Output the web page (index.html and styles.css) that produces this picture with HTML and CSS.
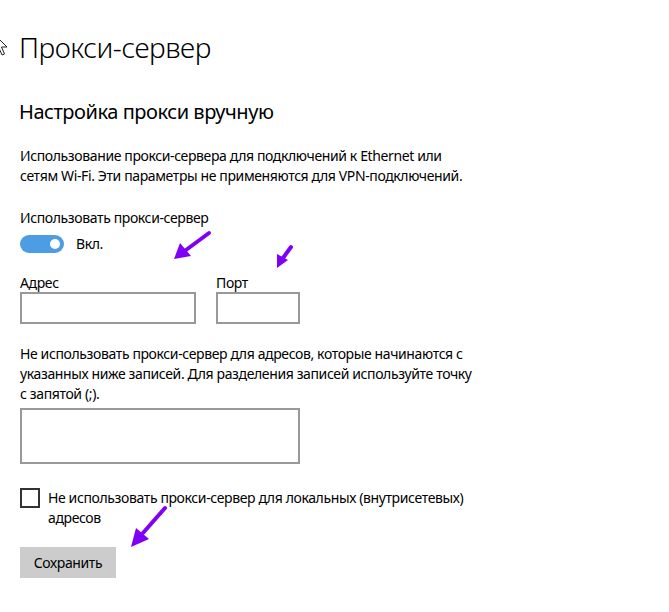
FILE: index.html
```html
<!DOCTYPE html>
<html lang="ru">
<head>
<meta charset="utf-8">
<title>Прокси-сервер</title>
<link rel="stylesheet" href="styles.css">
</head>
<body>
<main class="page">
  <h1 class="title">Прокси-сервер</h1>
  <h2 class="subtitle">Настройка прокси вручную</h2>

  <p class="text intro">Использование прокси-сервера для подключений к Ethernet или<br>сетям Wi-Fi. Эти параметры не применяются для VPN-подключений.</p>

  <div class="field-label">Использовать прокси-сервер</div>
  <div class="toggle-row">
    <span class="toggle"><span class="knob"></span></span>
    <span class="toggle-text">Вкл.</span>
  </div>

  <div class="inputs">
    <label class="field">
      <span class="field-caption">Адрес</span>
      <span class="box box-address"></span>
    </label>
    <label class="field">
      <span class="field-caption">Порт</span>
      <span class="box box-port"></span>
    </label>
  </div>

  <p class="text exceptions">Не использовать прокси-сервер для адресов, которые начинаются с<br>указанных ниже записей. Для разделения записей используйте точку<br>с запятой (;).</p>
  <div class="box box-area"></div>

  <div class="check-row">
    <span class="checkbox"></span>
    <span class="check-text">Не использовать прокси-сервер для локальных (внутрисетевых)<br>адресов</span>
  </div>

  <button class="save" type="button">Сохранить</button>
</main>

<!-- mouse pointer peeking in at the left edge -->
<svg class="pointer" width="20" height="28" viewBox="0 0 20 28">
  <path d="M1 1 L1 18 L5 14 L8 21 L10.5 20 L7.5 13 L13 13 Z" fill="#fff" stroke="#222" stroke-width="1"/>
</svg>

<!-- hand-drawn annotation arrows -->
<svg class="marks" width="669" height="612" viewBox="0 0 669 612">
  <g stroke="#7f00f5" stroke-width="4" stroke-linecap="round" fill="#7f00f5">
    <line x1="209" y1="233" x2="186" y2="250"/>
    <line x1="291" y1="247" x2="283" y2="258"/>
    <line x1="165" y1="508" x2="143" y2="533"/>
  </g>
  <g fill="#7f00f5">
    <polygon points="174,259 180,243 191,256"/>
    <polygon points="277,268 277,254 288,260"/>
    <polygon points="131,547 136,528 149,539"/>
  </g>
</svg>
</body>
</html>
```

FILE: styles.css
```css
html, body {
  margin: 0;
  padding: 0;
  background: #fff;
}

body {
  font-family: "Noto Sans", "Open Sans", "DejaVu Sans", sans-serif;
  color: #000;
  position: relative;
  width: 669px;
  height: 612px;
  overflow: hidden;
}

.page {
  padding: 29px 0 0 20px;
  display: flex;
  flex-direction: column;
  align-items: flex-start;
}

.title {
  margin: 0 0 0 -1px;
  font-size: 28px;
  line-height: 36px;
  font-weight: 300;
  letter-spacing: -0.45px;
}

.subtitle {
  margin: 33px 0 0 -1px;
  font-size: 20px;
  line-height: 28px;
  font-weight: 400;
  letter-spacing: -0.45px;
}

.text,
.field-label,
.toggle-text,
.field-caption,
.check-text,
.save {
  font-size: 14px;
  letter-spacing: -0.38px;
}

.text {
  margin: 0;
  line-height: 20px;
}

.intro {
  margin-top: 20px;
}

.field-label {
  margin-top: 22px;
  line-height: 20px;
}

.toggle-row {
  margin-top: 6px;
  display: flex;
  align-items: center;
  gap: 12px;
}

.toggle {
  width: 44px;
  height: 18px;
  border-radius: 9px;
  background: #4c9de3;
  display: flex;
  align-items: center;
  justify-content: flex-end;
  padding-right: 4px;
  box-sizing: border-box;
}

.knob {
  width: 10px;
  height: 10px;
  border-radius: 50%;
  background: #fff;
}

.toggle-text {
  line-height: 20px;
}

.inputs {
  margin-top: 20px;
  display: flex;
  gap: 20px;
}

.field {
  display: flex;
  flex-direction: column;
}

.field-caption {
  line-height: 18px;
}

.box {
  display: block;
  border: 2px solid #999;
  box-sizing: border-box;
  background: #fff;
}

.box-address {
  width: 176px;
  height: 32px;
}

.box-port {
  width: 84px;
  height: 32px;
}

.exceptions {
  margin-top: 20px;
}

.box-area {
  margin-top: 4px;
  width: 280px;
  height: 56px;
}

.check-row {
  margin-top: 24px;
  display: flex;
  align-items: flex-start;
  gap: 8px;
}

.checkbox {
  flex: none;
  width: 20px;
  height: 20px;
  border: 2px solid #333;
  box-sizing: border-box;
}

.check-text {
  line-height: 20px;
}

.save {
  margin-top: 19px;
  width: 96px;
  height: 31px;
  border: 0;
  background: #cccccc;
  font-family: inherit;
  color: #000;
  padding: 0;
}

.pointer {
  position: absolute;
  left: -6px;
  top: 34px;
}

.marks {
  position: absolute;
  left: 0;
  top: 0;
  pointer-events: none;
}
```
